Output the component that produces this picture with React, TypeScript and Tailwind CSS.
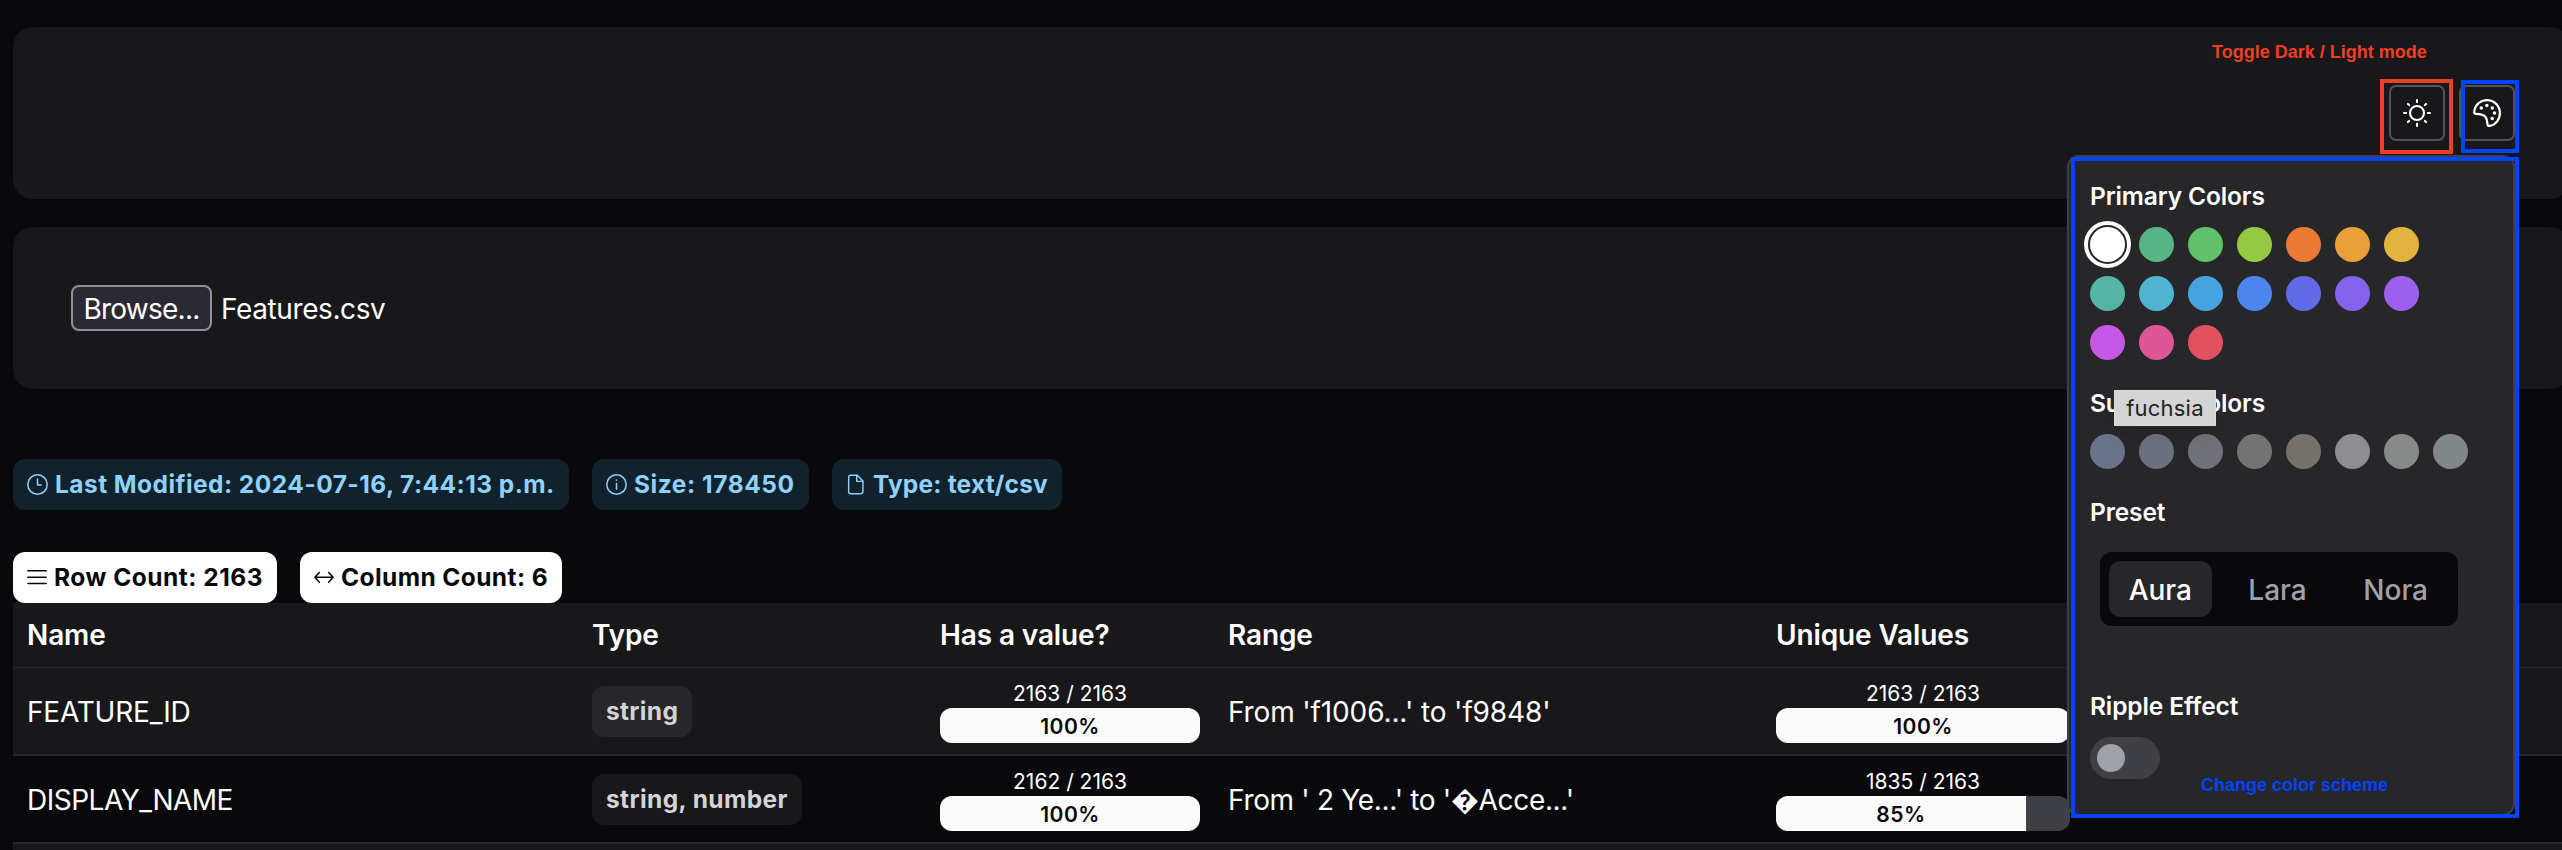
import type { ReactNode } from "react";

const stroke = {
  fill: "none",
  stroke: "currentColor",
  strokeLinecap: "round" as const,
  strokeLinejoin: "round" as const,
};

function ClockIcon() {
  return (
    <svg className="size-[21px]" viewBox="0 0 21 21" {...stroke} strokeWidth={1.5}>
      <circle cx="10.5" cy="10.5" r="9.7" />
      <path d="M10.5 5v5.9h3.7" />
    </svg>
  );
}

function InfoIcon() {
  return (
    <svg className="size-[21px]" viewBox="0 0 21 21" {...stroke} strokeWidth={1.5}>
      <circle cx="10.5" cy="10.5" r="9.7" />
      <path d="M10.5 9.5v5.8M10.5 5.9v.4" />
    </svg>
  );
}

function FileIcon() {
  return (
    <svg className="size-[21px]" viewBox="0 0 21 21" {...stroke} strokeWidth={1.5}>
      <path d="M5 .8h6.9l6 6V18a2.2 2.2 0 0 1-2.2 2.2H5A2.2 2.2 0 0 1 2.8 18V3A2.2 2.2 0 0 1 5 .8z" />
      <path d="M11.3 1v6.2h6.3" />
    </svg>
  );
}

function BarsIcon() {
  return (
    <svg className="size-[21px]" viewBox="0 0 21 21" {...stroke} strokeWidth={1.6}>
      <path d="M.9 3.5h19.2M.9 10.2h19.2M.9 16.9h19.2" />
    </svg>
  );
}

function ArrowsIcon() {
  return (
    <svg className="size-[21px]" viewBox="0 0 21 21" {...stroke} strokeWidth={1.6}>
      <path d="M1 10.3h19M5.6 5.2L.9 10.3l4.700 5.100M15.400 5.200l4.700 5.100-4.700 5.100" />
    </svg>
  );
}

function SunIcon() {
  return (
    <svg className="size-7" viewBox="0 0 28 28" {...stroke} strokeWidth={2.1}>
      <circle cx="14" cy="14" r="7" />
      <path d="M14 1.1v2M14 24.9v2M1.1 14h2M24.9 14h2M4.9 4.9l1.2 1.2M21.9 21.9l1.2 1.2M4.9 23.1l1.2-1.2M21.9 6.1l1.2-1.2" />
    </svg>
  );
}

function PaletteIcon() {
  return (
    <svg className="size-7" viewBox="0 0 28 28" {...stroke} strokeWidth={2.2}>
      <path d="M1.2 13.2C1.5 6.4 7.1 1.1 14 1.1c7.1 0 12.9 5.8 12.9 12.9 0 6.7-4.4 12-10.2 12.9-1.5.2-2.2-.5-2.3-1.9-.2-3.3-.7-5.7-2.3-7.5-1.8-2-4.4-2.5-9-2.7-1.3 0-1.9-.5-1.9-1.6z" />
      <g fill="currentColor" stroke="none">
        <circle cx="8.3" cy="9" r="1.75" />
        <circle cx="13.8" cy="6.4" r="1.75" />
        <circle cx="19.3" cy="8.9" r="1.75" />
        <circle cx="21.5" cy="14.1" r="1.75" />
        <circle cx="19.2" cy="19.5" r="1.75" />
      </g>
    </svg>
  );
}

function Tag({ className, icon, children }: { className: string; icon?: ReactNode; children: ReactNode }) {
  return (
    <span
      className={`inline-flex h-[51px] shrink-0 items-center gap-[7px] whitespace-nowrap rounded-xl px-[14px] text-[24.5px] font-bold leading-[37px] ${className}`}
    >
      {icon}
      <span>{children}</span>
    </span>
  );
}

function Progress({ label, value }: { label: string; value: number }) {
  return (
    <div className="flex flex-col pt-[10px]">
      <div className="h-[30px] text-center text-[21px] leading-8">{label}</div>
      <div className="h-[35px] overflow-hidden rounded-xl bg-[#3f3f46]">
        <div
          className="flex h-full items-center justify-center bg-[#fafafa] pt-[2px] text-[21px] font-semibold tracking-[0.5px] text-[#09090b]"
          style={{ width: `${value}%` }}
        >
          {value}%
        </div>
      </div>
    </div>
  );
}

const columns = "grid grid-cols-[565px_348px_288px_548px_322px_1fr]";

const rows = [
  {
    name: "FEATURE_ID",
    nameStyle: "tracking-[-0.2px]",
    type: "string",
    typeStyle: "bg-[#27272a] tracking-[0.33px]",
    has: "2163 / 2163",
    hasPct: 100,
    range: "From 'f1006...' to 'f9848'",
    rangeStyle: "tracking-[-0.13px]",
    uniq: "2163 / 2163",
    uniqPct: 100,
    rowStyle: "bg-[#18181b]",
  },
  {
    name: "DISPLAY_NAME",
    nameStyle: "tracking-[-0.5px]",
    type: "string, number",
    typeStyle: "bg-[#18181b] tracking-[0.4px]",
    has: "2162 / 2163",
    hasPct: 100,
    range: "From ' 2 Ye...' to '\uFFFDAcce...'",
    rangeStyle: "tracking-[-0.33px]",
    uniq: "1835 / 2163",
    uniqPct: 85,
    rowStyle: "bg-[#09090b]",
  },
];

const primary = [
  "bg-white outline-4 outline-offset-2 outline-white",
  "bg-[#56b686]",
  "bg-[#5fc26b]",
  "bg-[#95c942]",
  "bg-[#eb7a35]",
  "bg-[#e9a03b]",
  "bg-[#e2b33f]",
  "bg-[#55b4a5]",
  "bg-[#50b3d0]",
  "bg-[#46a3e1]",
  "bg-[#4a86ed]",
  "bg-[#616be7]",
  "bg-[#8463ec]",
  "bg-[#9d5fee]",
  "bg-[#c758e6]",
  "bg-[#dc5797]",
  "bg-[#e24f60]",
];

const surface = [
  "bg-[#68748a]",
  "bg-[#6c717f]",
  "bg-[#717179]",
  "bg-[#737373]",
  "bg-[#77716c]",
  "bg-[#8e8e92]",
  "bg-[#888989]",
  "bg-[#828787]",
];

function Title({ children }: { children: ReactNode }) {
  return <div className="h-[36px] text-[24.5px] font-semibold leading-[37px] tracking-[-0.12px]">{children}</div>;
}

function ThemePanel() {
  return (
    <div className="absolute left-[2067px] top-[155px] flex h-[661px] w-[448px] flex-col rounded-xl border-2 border-[#3f3f46] bg-[#27272a] pl-[21px] pt-[21px]">
      <Title>Primary Colors</Title>
      <div className="mt-[13px] flex w-[343px] flex-wrap gap-[14px]">
        {primary.map((c) => (
          <span key={c} className={`size-[35px] rounded-full ${c}`} />
        ))}
      </div>
      <div className="mt-[25px]">
        <Title>Surface Colors</Title>
      </div>
      <div className="mt-[13px] flex gap-[14px]">
        {surface.map((c) => (
          <span key={c} className={`size-[35px] rounded-full ${c}`} />
        ))}
      </div>
      <div className="mt-[25px]">
        <Title>Preset</Title>
      </div>
      <div className="ml-[10px] mt-[22px] flex h-[74px] w-[358px] items-center rounded-xl bg-[#09090b] px-[9px] text-[28px] font-medium text-[#a1a1aa]">
        <div className="flex h-14 w-[103px] items-center justify-center rounded-xl bg-[#27272a] pt-[2px] text-white">Aura</div>
        <div className="ml-[16px] flex h-14 w-[100px] items-center justify-center pt-[2px]">Lara</div>
        <div className="ml-[15px] flex h-14 w-[107px] items-center justify-center pt-[2px]">Nora</div>
      </div>
      <div className="mt-[62px]">
        <Title>Ripple Effect</Title>
      </div>
      <div className="mt-[13px] flex h-[42px] w-[70px] items-center rounded-full bg-[#3f3f46] pl-[7px]">
        <span className="size-7 rounded-full bg-[#a1a1aa]" />
      </div>
    </div>
  );
}

export default function App() {
  return (
    <div className="relative h-[850px] w-[2562px] overflow-hidden bg-[#09090b] pl-[13px] pt-[27px] font-['Inter',sans-serif] text-[28px] text-white">
      <header className="flex h-[172px] w-[2557px] items-center justify-end gap-[14px] rounded-[20px] bg-[#18181b] pr-[55px]">
        <button className="flex size-14 items-center justify-center rounded-[7px] border-2 border-[#52525b]">
          <SunIcon />
        </button>
        <button className="flex size-14 items-center justify-center rounded-[7px] border-2 border-[#52525b]">
          <PaletteIcon />
        </button>
      </header>

      <section className="mt-7 flex h-[162px] w-[2557px] items-center rounded-[20px] bg-[#18181b] pl-[58px]">
        <button className="flex h-[46px] w-[141px] items-center justify-center rounded-lg border-2 border-[#8f8f9d] bg-[#2b2a33] pt-[2px] text-[28px] tracking-[-0.75px]">
          Browse...
        </button>
        <span className="ml-[9px] pt-[2px] tracking-[-0.4px]">Features.csv</span>
      </section>

      <div className="mt-[70px] flex gap-[23px]">
        <Tag className="w-[556px] bg-[#11222d] tracking-[0.45px] text-[#8fd1fb]" icon={<ClockIcon />}>Last Modified: 2024-07-16, 7:44:13 p.m.</Tag>
        <Tag className="w-[217px] bg-[#11222d] tracking-[0.55px] text-[#8fd1fb]" icon={<InfoIcon />}>Size: 178450</Tag>
        <Tag className="w-[230px] bg-[#11222d] tracking-[0.2px] text-[#8fd1fb]" icon={<FileIcon />}>Type: text/csv</Tag>
      </div>
      <div className="mt-[42px] flex gap-[23px]">
        <Tag className="w-[264px] bg-white tracking-[0.5px] text-[#09090b]" icon={<BarsIcon />}>Row Count: 2163</Tag>
        <Tag className="w-[262px] bg-white tracking-[0.4px] text-[#09090b]" icon={<ArrowsIcon />}>Column Count: 6</Tag>
      </div>

      <div>
        <div className={`${columns} h-[65px] items-center border-b border-[#27272a] bg-[#18181b] font-semibold tracking-[-0.12px]`}>
          <div className="px-[14px]">Name</div>
          <div className="px-[14px]">Type</div>
          <div className="px-[14px]">Has a value?</div>
          <div className="px-[14px]">Range</div>
          <div className="px-[14px]">Unique Values</div>
        </div>
        {rows.map((r) => (
          <div key={r.name} className={`${columns} h-[88px] border-b-2 border-[#27272a] ${r.rowStyle}`}>
            <div className={`flex items-center px-[14px] pt-[2px] ${r.nameStyle}`}>{r.name}</div>
            <div className="flex items-center px-[14px]">
              <Tag className={`text-[#d4d4d8] ${r.typeStyle}`}>{r.type}</Tag>
            </div>
            <div className="px-[14px]"><Progress label={r.has} value={r.hasPct} /></div>
            <div className={`flex items-center px-[14px] pt-[2px] ${r.rangeStyle}`}>{r.range}</div>
            <div className="px-[14px]"><Progress label={r.uniq} value={r.uniqPct} /></div>
          </div>
        ))}
        <div className="h-3 bg-[#18181b]" />
      </div>

      <ThemePanel />

      <div className="absolute left-[2114px] top-[390px] flex h-9 w-[102px] items-center justify-center border border-[#dcdddd] bg-[#d3d5d5] text-[22px] tracking-[0.2px] text-[#222224] shadow-lg">
        fuchsia
      </div>

      <div className="absolute left-[2212px] top-[40px] whitespace-nowrap font-['Liberation_Sans',sans-serif] text-[18px] font-bold leading-6 text-[#ee3e24]">
        Toggle Dark / Light mode
      </div>
      <div className="absolute left-[2380px] top-[79px] h-[75px] w-[73px] border-4 border-[#ee3e24]" />
      <div className="absolute left-[2461px] top-[80px] h-[73px] w-[58px] border-4 border-[#0043ff]" />
      <div className="absolute left-[2071px] top-[157px] h-[661px] w-[448px] border-4 border-[#0043ff]" />
      <div className="absolute left-[2201px] top-[773px] whitespace-nowrap font-['Liberation_Sans',sans-serif] text-[18px] font-bold leading-6 text-[#0043ff]">
        Change color scheme
      </div>
    </div>
  );
}
